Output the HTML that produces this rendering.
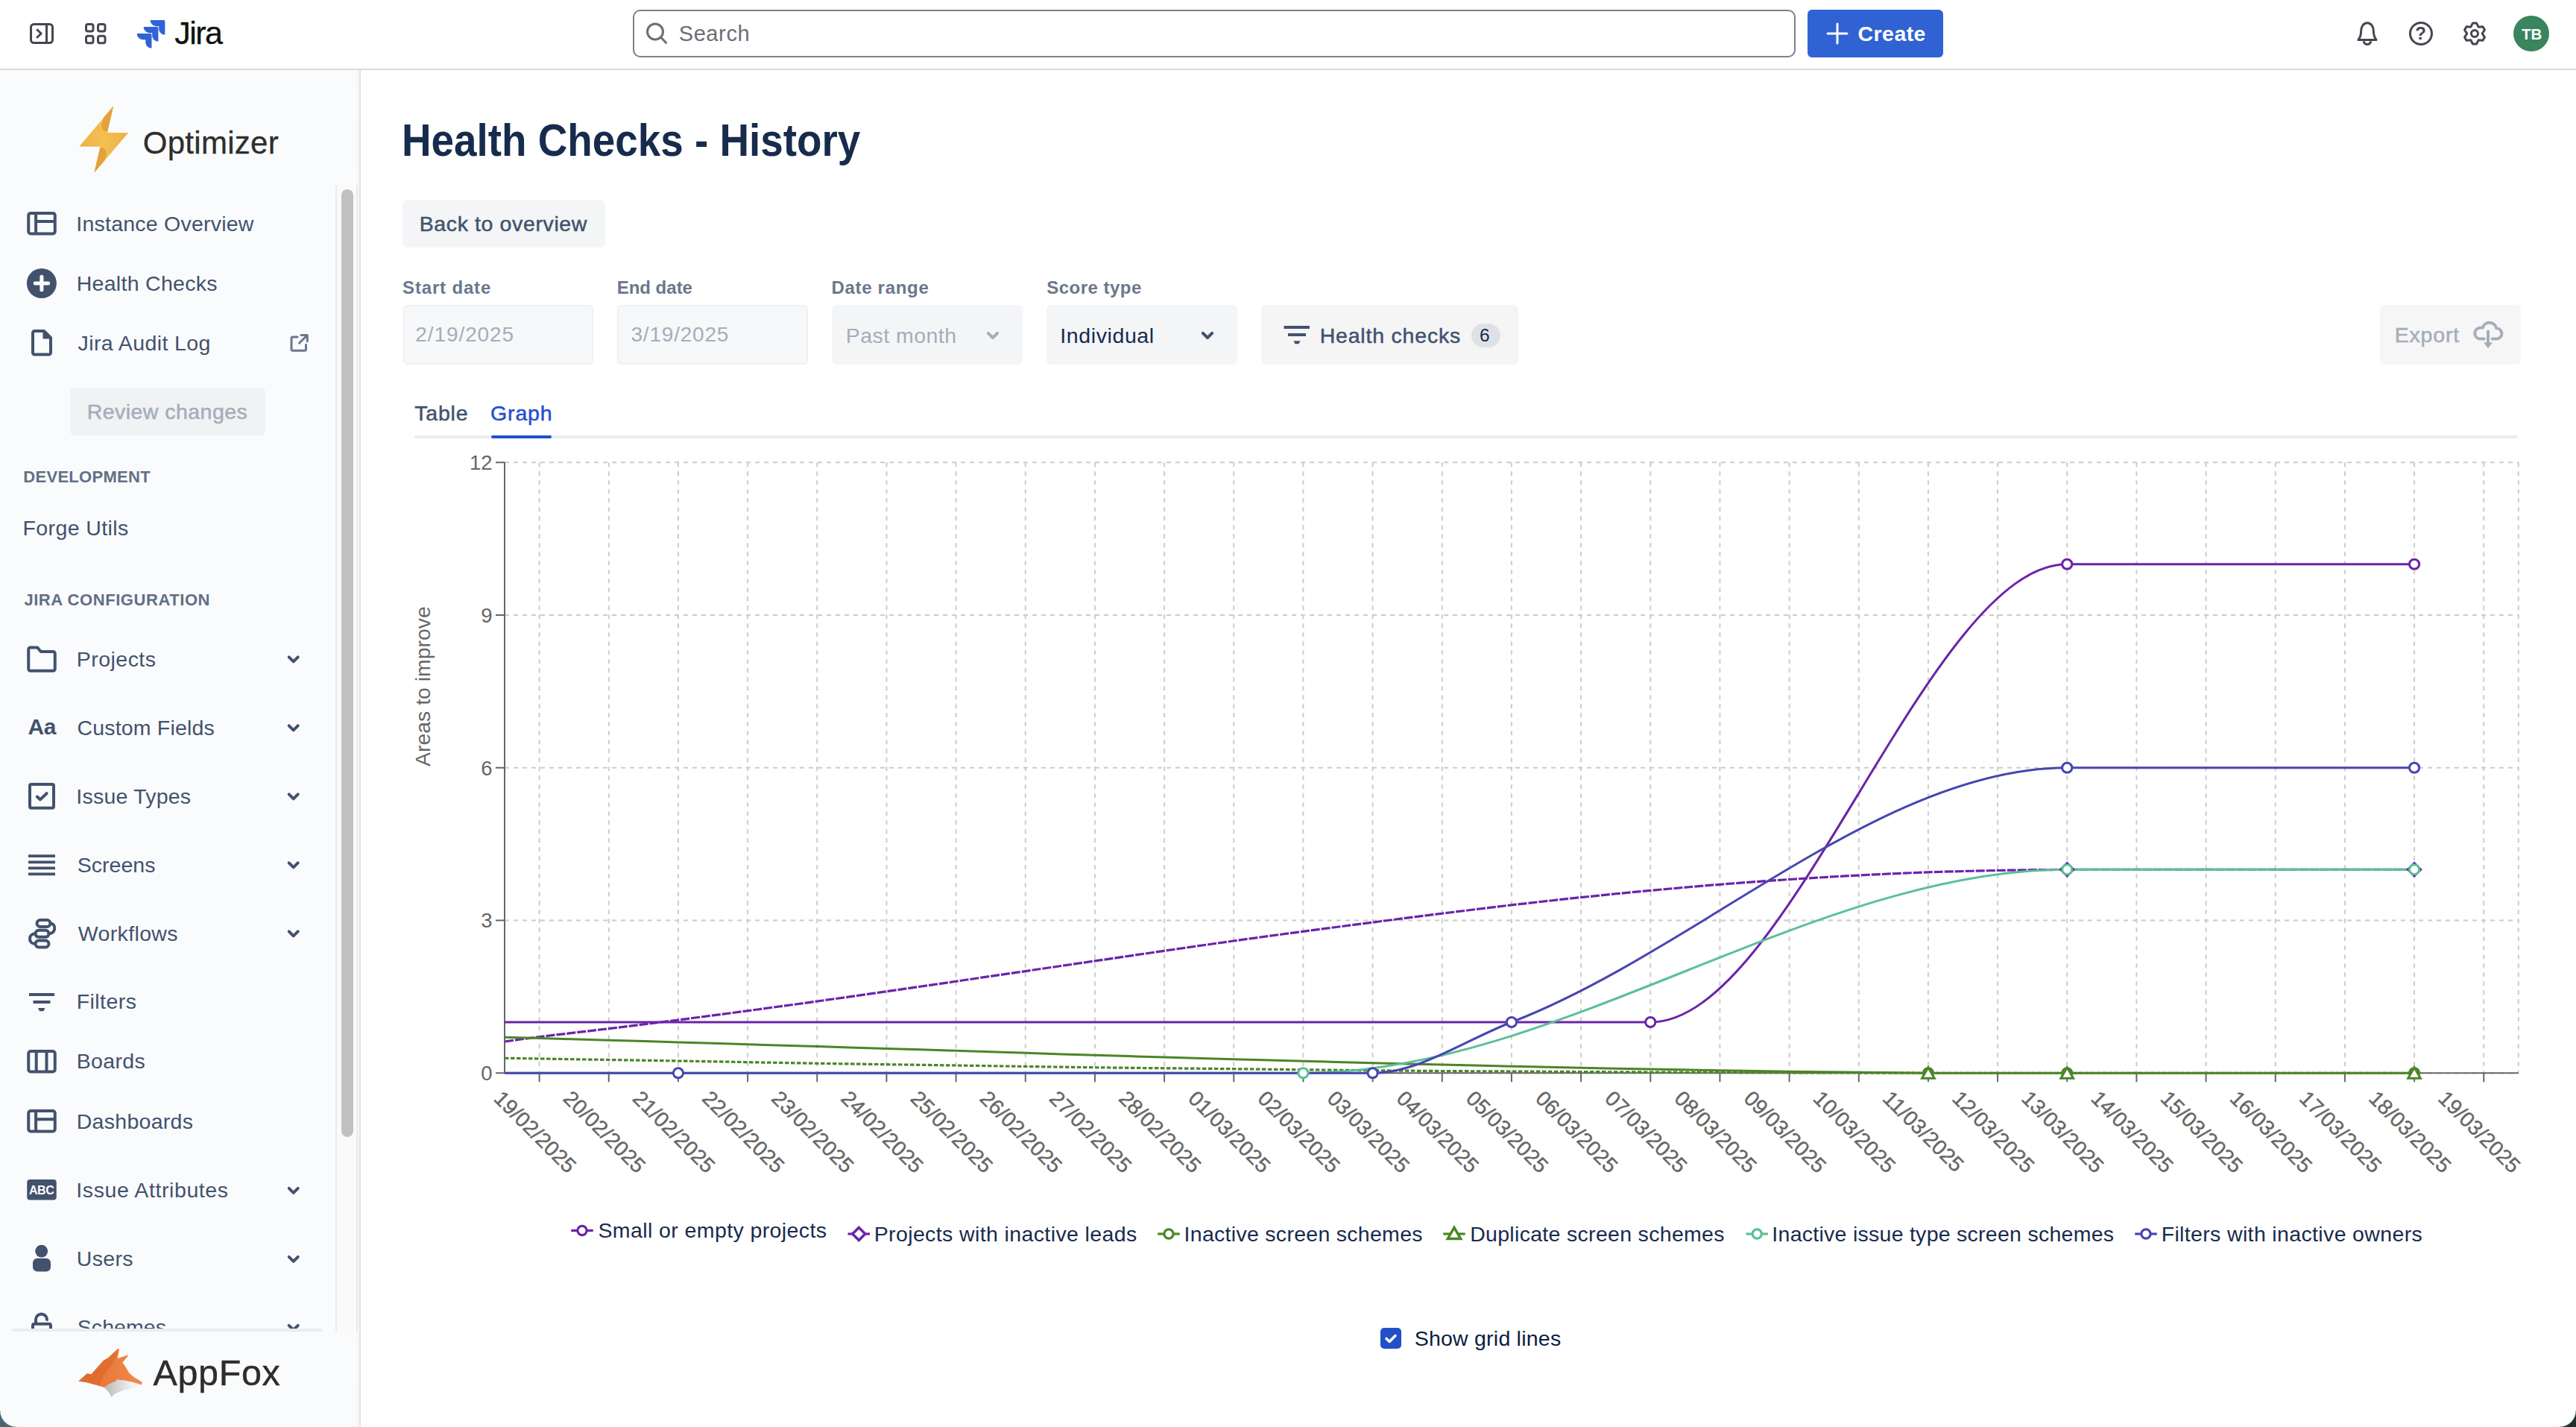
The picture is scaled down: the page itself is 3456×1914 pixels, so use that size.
<!DOCTYPE html>
    <html lang="en"><head><meta charset="utf-8"><title>Health Checks - History</title>
    <style>
    html,body{margin:0;padding:0;background:#fff;}
    body{width:3456px;height:1914px;position:relative;overflow:hidden;font-family:"Liberation Sans",sans-serif;}
    .t{position:absolute;white-space:nowrap;line-height:1;}
    .abs{position:absolute;}
    svg{position:absolute;overflow:visible}
    svg text{font-family:"Liberation Sans",sans-serif;}
    .btn{position:absolute;border-radius:6px;}
    </style></head><body>
    
<div class="abs" style="left:0;top:0;width:3456px;height:92px;background:#fff;border-bottom:2px solid #DADADA"></div>
<div class="abs" style="left:0;top:94px;width:482px;height:1820px;background:linear-gradient(to right,#FAFBFC 478px,#F6F6F6 480px,#F6F6F6 482px);border-right:2px solid #E3E3E3"></div>
<svg style="left:0;top:0" width="3456" height="92" viewBox="0 0 3456 92" fill="none" stroke="#44474F" stroke-width="3" stroke-linecap="round" stroke-linejoin="round">
    <rect x="41.5" y="32.5" width="29" height="25" rx="4"/><path d="M62.5,33V57M50,40l5.2,5-5.2,5"/>
    <rect x="115.5" y="32.5" width="9.5" height="9.5" rx="2.5"/><rect x="131.5" y="32.5" width="9.5" height="9.5" rx="2.5"/>
    <rect x="115.5" y="48.2" width="9.5" height="9.5" rx="2.5"/><rect x="131.5" y="48.2" width="9.5" height="9.5" rx="2.5"/>
    <g transform="translate(178.3,22.3) scale(1.472)" fill="#2F63D6" stroke="none">
    <path d="M28.128 3.2H15.872c0 3.072 2.496 5.568 5.568 5.568h2.24v2.176c0 3.072 2.496 5.568 5.568 5.568V4.32c0-.608-.512-1.12-1.12-1.12z"/>
    <path d="M22.048 9.312H9.792c0 3.072 2.496 5.568 5.568 5.568h2.24v2.176c0 3.072 2.496 5.568 5.568 5.568V10.432c0-.608-.512-1.12-1.12-1.12z"/>
    <path d="M15.968 15.424H3.712c0 3.072 2.496 5.568 5.568 5.568h2.24v2.176c0 3.072 2.496 5.568 5.568 5.568V16.544c0-.608-.512-1.12-1.12-1.12z"/>
    </g>
    <g stroke="#6B6E76"><circle cx="879" cy="42.5" r="10.5"/><path d="M886.8,50.3L893.5,57.3"/></g>
    </svg>
<span class="t " style="top:22.95px;font-size:43px;color:#101214;left:234.33px;letter-spacing:-1.542px;-webkit-text-stroke:0.3px #101214;">Jira</span>
<div class="abs" style="left:849px;top:13px;width:1556px;height:60px;border:2px solid #7D818A;border-radius:10px;background:#fff"></div>
<svg style="left:0;top:0" width="3456" height="92" viewBox="0 0 3456 92" fill="none" stroke="#6B6E76" stroke-width="3" stroke-linecap="round"><circle cx="879" cy="42.5" r="10.5"/><path d="M886.8,50.3L893.5,57.3"/></svg>
<span class="t " style="top:31.05px;font-size:29px;color:#6B6E76;left:910.68px;letter-spacing:0.612px;">Search</span>
<div class="abs" style="left:2425px;top:13px;width:182px;height:64px;border-radius:6px;background:#3062D4"></div>
<svg style="left:0;top:0" width="3456" height="92" viewBox="0 0 3456 92" fill="none" stroke="#fff" stroke-width="3" stroke-linecap="round"><path d="M2452,45H2478M2465,32V58"/></svg>
<span class="t " style="top:31.47px;font-size:28.5px;color:#fff;font-weight:700;left:2492.58px;letter-spacing:0.435px;">Create</span>
<svg style="left:0;top:0" width="3456" height="92" viewBox="0 0 3456 92" fill="none" stroke="#44474F" stroke-width="3" stroke-linecap="round" stroke-linejoin="round">
    <path d="M3164,53.5c2.6-3.6,3.6-6.2,3.6-11.5c0-6.6,3.6-11.3,8.4-11.3s8.400,4.700,8.400,11.300c0,5.300,1,7.900,3.600,11.500z"/>
    <path d="M3171.5,56.5c0.8,2,2.400,3,4.500,3s3.700-1,4.500-3"/>
    <circle cx="3248" cy="45" r="14.5"/>
    <path d="M3317.52,30.92L3322.48,30.92L3325.10,36.17L3330.95,35.81L3333.44,40.11L3330.20,45.00L3333.44,49.89L3330.95,54.19L3325.10,53.83L3322.48,59.08L3317.52,59.08L3314.90,53.83L3309.05,54.19L3306.56,49.89L3309.80,45.00L3306.56,40.11L3309.05,35.81L3314.90,36.17Z"/><circle cx="3320" cy="45" r="4.500"/>
    </svg>
<span class="t" style="left:3240.2px;top:32.6px;font-size:24px;font-weight:700;color:#44474F">?</span>
<div class="abs" style="left:3372px;top:21px;width:48px;height:48px;border-radius:50%;background:#38855E"></div>
<span class="t " style="top:35.02px;font-size:21px;color:#fff;font-weight:700;left:3382.77px;transform:scaleX(0.9772);transform-origin:0 0;">TB</span>
<svg style="left:0;top:0" width="482" height="1914" viewBox="0 0 482 1914">
    <defs><linearGradient id="bolt" x1="0" y1="0" x2="1" y2="1"><stop offset="0" stop-color="#E9A23A"/><stop offset=".5" stop-color="#F3BC4B"/><stop offset="1" stop-color="#E9A640"/></linearGradient>
    <radialGradient id="bolt2" cx=".5" cy=".5" r=".55"><stop offset="0" stop-color="#F4C152"/><stop offset="1" stop-color="#EDAE43"/></radialGradient></defs>
    <path d="M152.060,142.500L106.400,196.400L134.600,196.700L126.400,231.600L172.100,178.200L143.900,177.800Z" fill="url(#bolt2)"/>
    <path d="M152.060,142.500L143.900,177.800C138,177.500,134.500,172,135.200,167C136,161,140,156,143.500,152.600Z" fill="#E5A13C"/>
    <path d="M126.400,231.600L134.600,196.700C140.500,197,144,201.500,143.900,206.500C143.500,212,140,216.500,136.900,219.400Z" fill="#E5A13C"/>
    <path d="M143.900,177.800C138,177.500,134.500,172,135.200,167C136,161,140,156,143.500,152.600M134.600,196.700C140.500,197,144,201.500,143.900,206.500C143.500,212,140,216.500,136.900,219.400" fill="none" stroke="#F9D977" stroke-width="0.9"/>
    </svg>
<span class="t " style="top:170.80px;font-size:42px;color:#2E2E2E;left:191.76px;letter-spacing:0.279px;-webkit-text-stroke:0.3px #2E2E2E;">Optimizer</span>
<span class="t " style="top:286.47px;font-size:28.5px;color:#42526E;left:102.37px;letter-spacing:0.226px;">Instance Overview</span>
<span class="t " style="top:365.97px;font-size:28.5px;color:#42526E;left:102.66px;letter-spacing:0.294px;">Health Checks</span>
<span class="t " style="top:446.47px;font-size:28.5px;color:#42526E;left:104.55px;letter-spacing:0.391px;">Jira Audit Log</span>
<span class="t " style="top:870.22px;font-size:28.5px;color:#42526E;left:102.66px;letter-spacing:0.488px;">Projects</span>
<span class="t " style="top:961.97px;font-size:28.5px;color:#42526E;left:103.55px;letter-spacing:0.174px;">Custom Fields</span>
<span class="t " style="top:1053.97px;font-size:28.5px;color:#42526E;left:102.37px;letter-spacing:0.210px;">Issue Types</span>
<span class="t " style="top:1145.97px;font-size:28.5px;color:#42526E;left:103.71px;letter-spacing:0.044px;">Screens</span>
<span class="t " style="top:1237.72px;font-size:28.5px;color:#42526E;left:104.87px;letter-spacing:0.342px;">Workflows</span>
<span class="t " style="top:1329.47px;font-size:28.5px;color:#42526E;left:102.66px;letter-spacing:0.462px;">Filters</span>
<span class="t " style="top:1409.47px;font-size:28.5px;color:#42526E;left:102.66px;letter-spacing:0.361px;">Boards</span>
<span class="t " style="top:1490.22px;font-size:28.5px;color:#42526E;left:102.66px;letter-spacing:0.298px;">Dashboards</span>
<span class="t " style="top:1582.22px;font-size:28.5px;color:#42526E;left:102.37px;letter-spacing:0.587px;">Issue Attributes</span>
<span class="t " style="top:1673.97px;font-size:28.5px;color:#42526E;left:102.80px;letter-spacing:0.323px;">Users</span>
<div class="abs" style="left:0;top:1750px;width:450px;height:32px;overflow:hidden">
<span class="t " style="top:15.97px;font-size:28.5px;color:#42526E;left:103.71px;letter-spacing:0.085px;">Schemes</span>
</div>
<div class="abs" style="left:94px;top:520px;width:261.5px;height:64px;border-radius:6px;background:#F1F2F4"></div>
<span class="t " style="top:538.47px;font-size:28.5px;color:#A5ADBA;left:116.66px;letter-spacing:0.461px;-webkit-text-stroke:0.5px #A5ADBA;">Review changes</span>
<span class="t " style="top:629.48px;font-size:22px;color:#626F86;font-weight:700;left:31.28px;letter-spacing:0.299px;">DEVELOPMENT</span>
<span class="t " style="top:693.97px;font-size:28.5px;color:#42526E;left:30.41px;letter-spacing:0.407px;">Forge Utils</span>
<span class="t " style="top:793.98px;font-size:22px;color:#626F86;font-weight:700;left:32.42px;letter-spacing:0.559px;">JIRA CONFIGURATION</span>
<svg style="left:0;top:0" width="482" height="1914" viewBox="0 0 482 1914"><rect x="38.25" y="285.9" width="35.5" height="27.5" rx="3" fill="none" stroke="#42526E" stroke-width="4"/><path d="M48.1,285.9v27.5M48.1,297.09999999999997H73.75" fill="none" stroke="#42526E" stroke-width="4"/><circle cx="55.9" cy="380" r="20" fill="#42526E"/><path d="M47.2,380h17.4M55.9,371.3v17.4" stroke="#fff" stroke-width="5" stroke-linecap="round"/><path d="M59,444H46.500a2.500,2.500,0,0,0-2.500,2.500v26.5a2.500,2.500,0,0,0,2.500,2.500h19a2.500,2.500,0,0,0,2.500-2.500V453z" fill="none" stroke="#42526E" stroke-width="4" stroke-linejoin="round"/><path d="M57.5,443.5l11,11h-11z" fill="#42526E"/><g fill="none" stroke="#6B778C" stroke-width="3" stroke-linecap="round" stroke-linejoin="round"><path d="M399,452h-6a2,2,0,0,0-2,2v14.200a2,2,0,0,0,2,2h15.500a2,2,0,0,0,2-2v-6"/><path d="M404,449.500h8.300v8.300M412,449.800l-10.500,10.500"/></g><path d="M38.25,871a2.500,2.500,0,0,1,2.500-2.500h9.500l4.500,5.500h16.500a2.500,2.500,0,0,1,2.500,2.500v20.800a2.500,2.500,0,0,1-2.500,2.500h-30.500a2.500,2.500,0,0,1-2.500-2.500z" fill="none" stroke="#42526E" stroke-width="4" stroke-linejoin="round"/><path d="M387.7,881.3l6,6l6-6" fill="none" stroke="#42526E" stroke-width="4" stroke-linecap="round" stroke-linejoin="round"/><path d="M387.7,973.3l6,6l6-6" fill="none" stroke="#42526E" stroke-width="4" stroke-linecap="round" stroke-linejoin="round"/><rect x="40" y="1052" width="32" height="31.750" rx="2" fill="none" stroke="#42526E" stroke-width="4"/><path d="M49.800,1068.600l4.200,3.800l8.600-8.200" fill="none" stroke="#42526E" stroke-width="4" stroke-linecap="round" stroke-linejoin="round"/><path d="M387.7,1065.3l6,6l6-6" fill="none" stroke="#42526E" stroke-width="4" stroke-linecap="round" stroke-linejoin="round"/><path d="M38,1148.100h36M38,1156.300h36M38,1164.400h36M38,1172.400h36" stroke="#42526E" stroke-width="3.8" stroke-linecap="butt" fill="none"/><path d="M387.7,1157.3l6,6l6-6" fill="none" stroke="#42526E" stroke-width="4" stroke-linecap="round" stroke-linejoin="round"/><g fill="none" stroke="#42526E" stroke-width="4" stroke-linecap="round">
    <rect x="49.500" y="1234" width="18" height="9" rx="4.500"/><rect x="47.500" y="1247.800" width="18" height="9" rx="4.500"/><rect x="47.500" y="1261.500" width="18" height="9" rx="4.500"/>
    <path d="M67.500,1238.500c8,0,8,13.800,-2,13.800"/><path d="M47.500,1252.300c-10,0-10,13.700,0,13.700"/></g><path d="M387.7,1249.3l6,6l6-6" fill="none" stroke="#42526E" stroke-width="4" stroke-linecap="round" stroke-linejoin="round"/><path d="M39,1334h34M44.500,1344h23" stroke="#42526E" stroke-width="4" stroke-linecap="butt" fill="none"/><path d="M51,1352h9.500l-2,4.300h-5.500z" fill="#42526E"/><rect x="38.25" y="1410" width="35.500" height="27.500" rx="3" fill="none" stroke="#42526E" stroke-width="4"/><path d="M48.700,1410v27.500M62.500,1410v27.500" stroke="#42526E" stroke-width="4" fill="none"/><rect x="38.25" y="1490" width="35.5" height="27.5" rx="3" fill="none" stroke="#42526E" stroke-width="4"/><path d="M48.1,1490v27.5M48.1,1501.2H73.75" fill="none" stroke="#42526E" stroke-width="4"/><rect x="36.25" y="1582" width="39.500" height="27.500" rx="4" fill="#42526E"/><path d="M387.7,1593.8l6,6l6-6" fill="none" stroke="#42526E" stroke-width="4" stroke-linecap="round" stroke-linejoin="round"/><circle cx="55.700" cy="1678.200" r="8.400" fill="#42526E"/><rect x="44" y="1687.700" width="24" height="17.800" rx="6" fill="#42526E"/><path d="M387.7,1685.8l6,6l6-6" fill="none" stroke="#42526E" stroke-width="4" stroke-linecap="round" stroke-linejoin="round"/></svg>
<span class="t" style="left:37.5px;top:960.11px;font-size:30px;font-weight:700;color:#42526E;letter-spacing:-0.5px">Aa</span>
<span class="t" style="left:38.9px;top:1588.76px;font-size:16px;font-weight:700;color:#fff;letter-spacing:-0.4px">ABC</span>
<svg style="left:0;top:1750px;overflow:hidden" width="450" height="32" viewBox="0 1750 450 32"><g fill="none" stroke="#42526E" stroke-width="4" stroke-linecap="round"><path d="M48,1775v-5a7.500,7.500,0,0,1,15,0"/><rect x="44" y="1775.700" width="24" height="20" rx="2"/></g><path d="M387.7,1777.8l6,6l6-6" fill="none" stroke="#42526E" stroke-width="4" stroke-linecap="round" stroke-linejoin="round"/></svg>
<div class="abs" style="left:450px;top:248px;width:30px;height:1538px;background:#FAFAFA;border-left:2px solid #EAEAEA;border-right:2px solid #EAEAEA;box-sizing:border-box"></div>
<div class="abs" style="left:458px;top:254px;width:16px;height:1271px;border-radius:8px;background:#C1C1C1"></div>
<div class="abs" style="left:16px;top:1782px;width:417px;height:4px;border-radius:2px;background:#EBECF0"></div>
<svg style="left:0;top:0" width="482" height="1914" viewBox="0 0 482 1914">
    <defs><linearGradient id="fox" x1="0" y1="0" x2="1" y2="0"><stop offset="0" stop-color="#E56E2E"/><stop offset="1" stop-color="#F08C4C"/></linearGradient>
    <linearGradient id="foxw" x1="0" y1="0" x2="1" y2="0"><stop offset="0" stop-color="#B9B9B9"/><stop offset=".75" stop-color="#F3F3F3"/><stop offset="1" stop-color="#F8F8F8"/></linearGradient></defs>
    <path d="M105.4,1852.4L116.8,1842.3L122.5,1843.3L138.6,1825L144.9,1821.2L158.4,1808.9L160,1809.6L157.8,1821.9L171.3,1817.4L172,1818.4L164.4,1827.5L168.8,1833.8L173.2,1841.4L179.5,1847.1L187.4,1851.5L190.9,1854.6L189.6,1857.5L178.3,1854L165.700,1851.500L156.800,1850.500L155.600,1852.800L146.800,1856.500L139.800,1860.900L127.800,1857.200L115.200,1854Z" fill="url(#fox)"/>
    <path d="M105.4,1852.4L116.8,1842.3L122.5,1843.3L138.6,1825L144.9,1821.2L158.4,1808.9L155,1822L149,1832L139,1845L133,1858.700L127.800,1857.200L115.200,1854Z" fill="#D9652A" opacity=".55"/>
    <path d="M139.800,1860.900L146.800,1856.500L155.600,1852.800L156.800,1850.500L165.700,1851.500L178.300,1854L189.600,1857.500L181.400,1861.600L165.700,1864.700L153.700,1869.800L149.300,1874.200L146.800,1868.500L143.600,1864.700Z" fill="url(#foxw)"/>
    </svg>
<span class="t " style="top:1817.34px;font-size:48.5px;color:#2D2D2D;left:205.61px;letter-spacing:0.592px;-webkit-text-stroke:0.4px #2D2D2D;">AppFox</span>
<div class="abs" style="left:0;top:1892px;width:22px;height:22px;background:radial-gradient(circle at 100% 0,transparent 21px,#486570 22.5px)"></div>
<div class="abs" style="left:3434px;top:1892px;width:22px;height:22px;background:radial-gradient(circle at 0 0,transparent 21px,#1F2E33 22.5px)"></div>
<span class="t " style="top:157.71px;font-size:61px;color:#172B4D;font-weight:700;left:538.83px;transform:scaleX(0.8984);transform-origin:0 0;">Health Checks - History</span>
<div class="btn" style="left:540px;top:268px;width:272px;height:63.5px;background:#F4F5F6"></div>
<span class="t " style="top:285.97px;font-size:28.5px;color:#42526E;left:562.66px;letter-spacing:0.623px;-webkit-text-stroke:0.5px #42526E;">Back to overview</span>
<span class="t " style="top:374.03px;font-size:24px;color:#6B778C;font-weight:700;left:540.06px;letter-spacing:0.840px;">Start date</span>
<span class="t " style="top:374.03px;font-size:24px;color:#6B778C;font-weight:700;left:827.64px;">End date</span>
<span class="t " style="top:374.03px;font-size:24px;color:#6B778C;font-weight:700;left:1115.39px;letter-spacing:0.709px;">Date range</span>
<span class="t " style="top:374.03px;font-size:24px;color:#6B778C;font-weight:700;left:1404.31px;letter-spacing:0.477px;">Score type</span>
<div class="btn" style="left:540.5px;top:409px;width:255.5px;height:80px;background:#F7F8F9;border:2px solid #EFF0F2;box-sizing:border-box"></div>
<div class="btn" style="left:828px;top:409px;width:255.5px;height:80px;background:#F7F8F9;border:2px solid #EFF0F2;box-sizing:border-box"></div>
<div class="btn" style="left:1116px;top:409px;width:256px;height:80px;background:#F4F5F7"></div>
<div class="btn" style="left:1404px;top:409px;width:256px;height:80px;background:#F4F5F7"></div>
<div class="btn" style="left:1692px;top:409px;width:345px;height:80px;background:#F5F5F6"></div>
<div class="btn" style="left:3193px;top:409px;width:189px;height:80px;background:#F6F6F7"></div>
<span class="t " style="top:435.15px;font-size:28px;color:#A5ADBA;left:557.34px;letter-spacing:0.907px;">2/19/2025</span>
<span class="t " style="top:435.15px;font-size:28px;color:#A5ADBA;left:846.43px;letter-spacing:0.802px;">3/19/2025</span>
<span class="t " style="top:435.72px;font-size:28.5px;color:#A5ADBA;left:1134.66px;letter-spacing:0.476px;">Past month</span>
<span class="t " style="top:435.72px;font-size:28.5px;color:#172B4D;left:1422.37px;letter-spacing:0.596px;">Individual</span>
<span class="t " style="top:435.97px;font-size:28.5px;color:#42526E;left:1770.66px;letter-spacing:0.800px;-webkit-text-stroke:0.5px #42526E;">Health checks</span>
<div class="abs" style="left:1974px;top:434px;width:39px;height:32px;border-radius:16px;background:#DFE1E6"></div>
<span class="t " style="top:437.86px;font-size:24.5px;color:#172B4D;left:1985.01px;">6</span>
<span class="t " style="top:435.27px;font-size:28.5px;color:#A5ADBA;left:3212.66px;letter-spacing:0.834px;-webkit-text-stroke:0.5px #A5ADBA;">Export</span>
<svg style="left:0;top:0" width="3456" height="600" viewBox="0 0 3456 600" fill="none" stroke-linecap="round" stroke-linejoin="round">
    <path d="M1325.700,446.800l6.200,6.200l6.200-6.200" stroke="#A5ADBA" stroke-width="4"/>
    <path d="M1613.800,446.800l6.200,6.200l6.200-6.200" stroke="#42526E" stroke-width="4"/>
    <path d="M1722.500,439h34.500M1728,449h24" stroke="#42526E" stroke-width="4" stroke-linecap="butt"/><path d="M1735.500,457.300h9l-2,4h-5z" fill="#42526E" stroke="none"/>
    <g stroke="#A5ADBA" stroke-width="4"><path d="M3332.700,454.500H3327.300A7.400,7.400,0,0,1,3326.500,439.800L3330.800,439.600A9.500,9.500,0,0,1,3349.200,440.300A7.100,7.100,0,0,1,3349.300,454.600H3343.800"/><path d="M3338,444.500v15"/></g>
    <path d="M3332,459.300h12l-6,8z" fill="#A5ADBA" stroke="none"/>
    </svg>
<span class="t " style="top:539.72px;font-size:28.5px;color:#42526E;left:556.36px;letter-spacing:0.754px;-webkit-text-stroke:0.5px #42526E;">Table</span>
<span class="t " style="top:539.72px;font-size:28.5px;color:#1F50CC;left:658.07px;letter-spacing:0.829px;-webkit-text-stroke:0.5px #1F50CC;">Graph</span>
<div class="abs" style="left:556px;top:584px;width:2822px;height:4px;border-radius:2px;background:#EBECF0"></div>
<div class="abs" style="left:659px;top:584px;width:81px;height:4px;border-radius:2px;background:#1F50CC"></div>
<svg class="chart" width="3456" height="1914" viewBox="0 0 3456 1914" style="position:absolute;left:0;top:0;overflow:visible">
<defs><clipPath id="plot"><rect x="677.0" y="610.2" width="2701.8" height="843.0"/></clipPath></defs>
<path d="M677.0,1439.25H3378.8M677.0,1234.50H3378.8M677.0,1029.75H3378.8M677.0,825.00H3378.8M677.0,620.25H3378.8M723.60,620.25V1439.25M816.77,620.25V1439.25M909.93,620.25V1439.25M1003.10,620.25V1439.25M1096.26,620.25V1439.25M1189.43,620.25V1439.25M1282.60,620.25V1439.25M1375.76,620.25V1439.25M1468.93,620.25V1439.25M1562.09,620.25V1439.25M1655.26,620.25V1439.25M1748.43,620.25V1439.25M1841.59,620.25V1439.25M1934.76,620.25V1439.25M2027.92,620.25V1439.25M2121.09,620.25V1439.25M2214.26,620.25V1439.25M2307.42,620.25V1439.25M2400.59,620.25V1439.25M2493.75,620.25V1439.25M2586.92,620.25V1439.25M2680.09,620.25V1439.25M2773.25,620.25V1439.25M2866.42,620.25V1439.25M2959.58,620.25V1439.25M3052.75,620.25V1439.25M3145.92,620.25V1439.25M3239.08,620.25V1439.25M3332.25,620.25V1439.25M677.0,620.25V1439.25M3378.8,620.25V1439.25" fill="none" stroke="#ccc" stroke-width="2" stroke-dasharray="6 6"/>
<path d="M677.0,620.25V1439.25M677.0,1439.25H3378.8" fill="none" stroke="#666" stroke-width="2"/>
<path d="M665.0,1439.25H677.0M665.0,1234.50H677.0M665.0,1029.75H677.0M665.0,825.00H677.0M665.0,620.25H677.0M723.60,1439.25v12M816.77,1439.25v12M909.93,1439.25v12M1003.10,1439.25v12M1096.26,1439.25v12M1189.43,1439.25v12M1282.60,1439.25v12M1375.76,1439.25v12M1468.93,1439.25v12M1562.09,1439.25v12M1655.26,1439.25v12M1748.43,1439.25v12M1841.59,1439.25v12M1934.76,1439.25v12M2027.92,1439.25v12M2121.09,1439.25v12M2214.26,1439.25v12M2307.42,1439.25v12M2400.59,1439.25v12M2493.75,1439.25v12M2586.92,1439.25v12M2680.09,1439.25v12M2773.25,1439.25v12M2866.42,1439.25v12M2959.58,1439.25v12M3052.75,1439.25v12M3145.92,1439.25v12M3239.08,1439.25v12M3332.25,1439.25v12" fill="none" stroke="#666" stroke-width="2"/>
<text x="660.5" y="1449.2" text-anchor="end" font-size="27.5" fill="#666">0</text>
<text x="660.5" y="1244.4" text-anchor="end" font-size="27.5" fill="#666">3</text>
<text x="660.5" y="1039.7" text-anchor="end" font-size="27.5" fill="#666">6</text>
<text x="660.5" y="834.9" text-anchor="end" font-size="27.5" fill="#666">9</text>
<text x="660.5" y="630.1" text-anchor="end" font-size="27.5" fill="#666">12</text>
<text transform="translate(577,920.6) rotate(-90)" text-anchor="middle" font-size="28.4" fill="#666">Areas to improve</text>
<text transform="translate(661.0,1474.9) rotate(45)" font-size="28.3" fill="#666" stroke="#666" stroke-width="0.4">19/02/2025</text>
<text transform="translate(754.1,1474.9) rotate(45)" font-size="28.3" fill="#666" stroke="#666" stroke-width="0.4">20/02/2025</text>
<text transform="translate(847.3,1474.9) rotate(45)" font-size="28.3" fill="#666" stroke="#666" stroke-width="0.4">21/02/2025</text>
<text transform="translate(940.4,1474.9) rotate(45)" font-size="28.3" fill="#666" stroke="#666" stroke-width="0.4">22/02/2025</text>
<text transform="translate(1033.6,1474.9) rotate(45)" font-size="28.3" fill="#666" stroke="#666" stroke-width="0.4">23/02/2025</text>
<text transform="translate(1126.8,1474.9) rotate(45)" font-size="28.3" fill="#666" stroke="#666" stroke-width="0.4">24/02/2025</text>
<text transform="translate(1219.9,1474.9) rotate(45)" font-size="28.3" fill="#666" stroke="#666" stroke-width="0.4">25/02/2025</text>
<text transform="translate(1313.1,1474.9) rotate(45)" font-size="28.3" fill="#666" stroke="#666" stroke-width="0.4">26/02/2025</text>
<text transform="translate(1406.3,1474.9) rotate(45)" font-size="28.3" fill="#666" stroke="#666" stroke-width="0.4">27/02/2025</text>
<text transform="translate(1499.4,1474.9) rotate(45)" font-size="28.3" fill="#666" stroke="#666" stroke-width="0.4">28/02/2025</text>
<text transform="translate(1592.6,1474.9) rotate(45)" font-size="28.3" fill="#666" stroke="#666" stroke-width="0.4">01/03/2025</text>
<text transform="translate(1685.8,1474.9) rotate(45)" font-size="28.3" fill="#666" stroke="#666" stroke-width="0.4">02/03/2025</text>
<text transform="translate(1778.9,1474.9) rotate(45)" font-size="28.3" fill="#666" stroke="#666" stroke-width="0.4">03/03/2025</text>
<text transform="translate(1872.1,1474.9) rotate(45)" font-size="28.3" fill="#666" stroke="#666" stroke-width="0.4">04/03/2025</text>
<text transform="translate(1965.3,1474.9) rotate(45)" font-size="28.3" fill="#666" stroke="#666" stroke-width="0.4">05/03/2025</text>
<text transform="translate(2058.4,1474.9) rotate(45)" font-size="28.3" fill="#666" stroke="#666" stroke-width="0.4">06/03/2025</text>
<text transform="translate(2151.6,1474.9) rotate(45)" font-size="28.3" fill="#666" stroke="#666" stroke-width="0.4">07/03/2025</text>
<text transform="translate(2244.8,1474.9) rotate(45)" font-size="28.3" fill="#666" stroke="#666" stroke-width="0.4">08/03/2025</text>
<text transform="translate(2337.9,1474.9) rotate(45)" font-size="28.3" fill="#666" stroke="#666" stroke-width="0.4">09/03/2025</text>
<text transform="translate(2431.1,1474.9) rotate(45)" font-size="28.3" fill="#666" stroke="#666" stroke-width="0.4">10/03/2025</text>
<text transform="translate(2524.3,1474.9) rotate(45)" font-size="28.3" fill="#666" stroke="#666" stroke-width="0.4">11/03/2025</text>
<text transform="translate(2617.4,1474.9) rotate(45)" font-size="28.3" fill="#666" stroke="#666" stroke-width="0.4">12/03/2025</text>
<text transform="translate(2710.6,1474.9) rotate(45)" font-size="28.3" fill="#666" stroke="#666" stroke-width="0.4">13/03/2025</text>
<text transform="translate(2803.8,1474.9) rotate(45)" font-size="28.3" fill="#666" stroke="#666" stroke-width="0.4">14/03/2025</text>
<text transform="translate(2896.9,1474.9) rotate(45)" font-size="28.3" fill="#666" stroke="#666" stroke-width="0.4">15/03/2025</text>
<text transform="translate(2990.1,1474.9) rotate(45)" font-size="28.3" fill="#666" stroke="#666" stroke-width="0.4">16/03/2025</text>
<text transform="translate(3083.3,1474.9) rotate(45)" font-size="28.3" fill="#666" stroke="#666" stroke-width="0.4">17/03/2025</text>
<text transform="translate(3176.4,1474.9) rotate(45)" font-size="28.3" fill="#666" stroke="#666" stroke-width="0.4">18/03/2025</text>
<text transform="translate(3269.6,1474.9) rotate(45)" font-size="28.3" fill="#666" stroke="#666" stroke-width="0.4">19/03/2025</text>
<g clip-path="url(#plot)" fill="none" stroke-linejoin="round">
<path d="M677.0,1371.00L2214.26,1371.00C2400.59,1371.00,2586.92,756.75,2773.25,756.75L3239.08,756.75" stroke="#6B24A8" stroke-width="3"/>
<path d="M677.02,1397.00C692.54,1394.91,708.07,1392.65,723.60,1390.72C754.66,1386.88,785.71,1383.47,816.77,1379.68C847.82,1375.90,878.88,1371.99,909.93,1368.00C940.99,1364.01,972.04,1359.91,1003.10,1355.75C1034.15,1351.58,1065.21,1347.32,1096.26,1343.00C1127.32,1338.68,1158.37,1334.27,1189.43,1329.81C1220.49,1325.35,1251.54,1320.79,1282.60,1316.25C1313.65,1311.70,1344.71,1307.11,1375.76,1302.56C1406.82,1298.01,1437.87,1293.49,1468.93,1288.95C1499.98,1284.40,1531.04,1279.81,1562.09,1275.31C1593.15,1270.82,1624.20,1266.32,1655.26,1261.99C1686.32,1257.65,1717.37,1253.45,1748.43,1249.31C1779.48,1245.17,1810.54,1241.14,1841.59,1237.13C1872.65,1233.12,1903.70,1229.10,1934.76,1225.24C1965.81,1221.37,1996.87,1217.52,2027.92,1213.92C2058.98,1210.32,2090.03,1206.89,2121.09,1203.63C2152.15,1200.38,2183.20,1197.28,2214.26,1194.39C2245.31,1191.50,2276.37,1188.77,2307.42,1186.30C2338.48,1183.82,2369.53,1181.59,2400.59,1179.54C2431.64,1177.50,2462.70,1175.63,2493.75,1174.03C2524.81,1172.43,2555.86,1171.01,2586.92,1169.92C2617.98,1168.83,2649.03,1168.09,2680.09,1167.48C2711.14,1166.87,2742.20,1166.66,2773.25,1166.25L3239.08,1166.25" stroke="#6B24A8" stroke-width="3.2" stroke-dasharray="12 2"/>
<path d="M677.02,1391.27C692.54,1391.68,708.07,1392.07,723.60,1392.50C754.66,1393.36,785.71,1394.23,816.77,1395.14C847.82,1396.05,878.88,1397.02,909.93,1397.96C940.99,1398.89,972.04,1399.82,1003.10,1400.76C1034.15,1401.69,1065.21,1402.61,1096.26,1403.56C1127.32,1404.50,1158.37,1405.45,1189.43,1406.42C1220.49,1407.39,1251.54,1408.37,1282.60,1409.36C1313.65,1410.35,1344.71,1411.38,1375.76,1412.36C1406.82,1413.34,1437.87,1414.30,1468.93,1415.24C1499.98,1416.18,1531.04,1417.10,1562.09,1418.01C1593.15,1418.92,1624.20,1419.83,1655.26,1420.70C1686.32,1421.58,1717.37,1422.43,1748.43,1423.26C1779.48,1424.10,1810.54,1424.92,1841.59,1425.72C1872.65,1426.52,1903.70,1427.31,1934.76,1428.06C1965.81,1428.80,1996.87,1429.52,2027.92,1430.21C2058.98,1430.89,2090.03,1431.53,2121.09,1432.17C2152.15,1432.80,2183.20,1433.42,2214.26,1434.01C2245.31,1434.61,2276.37,1435.21,2307.42,1435.74C2338.48,1436.26,2369.53,1436.76,2400.59,1437.19C2431.64,1437.61,2462.70,1437.97,2493.75,1438.31C2524.81,1438.66,2555.86,1438.94,2586.92,1439.25L3239.08,1439.25" stroke="#4C8527" stroke-width="3"/>
<path d="M677.02,1419.25C692.54,1419.50,708.07,1419.75,723.60,1420.00C785.71,1421.00,847.82,1421.96,909.93,1423.01C972.04,1424.05,1034.15,1425.28,1096.26,1426.28C1158.37,1427.28,1220.49,1428.10,1282.60,1429.01C1344.71,1429.92,1406.82,1430.96,1468.93,1431.74C1531.04,1432.53,1593.15,1433.05,1655.26,1433.72C1717.37,1434.39,1779.48,1435.15,1841.59,1435.77C1872.65,1436.08,1903.70,1436.32,1934.76,1436.52C1965.81,1436.72,1996.87,1436.83,2027.92,1437.00C2090.03,1437.33,2152.15,1437.73,2214.26,1438.02C2276.37,1438.32,2338.48,1438.57,2400.59,1438.77C2462.70,1438.98,2524.81,1439.09,2586.92,1439.25L3239.08,1439.25" stroke="#4C8527" stroke-width="3.2" stroke-dasharray="5.500 2.500"/>
<path d="M677.0,1439.25L1748.43,1439.25C2090.03,1439.25,2431.64,1166.25,2773.25,1166.25L3239.08,1166.25" stroke="#5BBF98" stroke-width="3"/>
<path d="M677.0,1439.25L909.93,1439.25L909.93,1439.25C1220.49,1439.25,1531.04,1439.25,1841.59,1439.25C1903.70,1439.25,1965.81,1394.89,2027.92,1371.00C2276.37,1275.45,2524.81,1029.75,2773.25,1029.75C2928.53,1029.75,3083.81,1029.75,3239.08,1029.75" stroke="#4845B0" stroke-width="3"/>
</g>
<circle cx="2214.26" cy="1371.00" r="6.6" fill="#fff" stroke="#6B24A8" stroke-width="3"/>
<circle cx="2773.25" cy="756.75" r="6.6" fill="#fff" stroke="#6B24A8" stroke-width="3"/>
<circle cx="3239.08" cy="756.75" r="6.6" fill="#fff" stroke="#6B24A8" stroke-width="3"/>
<path d="M2773.25,1157.65L2781.85,1166.25L2773.25,1174.85L2764.65,1166.25Z" fill="#fff" stroke="#6B24A8" stroke-width="3"/>
<path d="M3239.08,1157.65L3247.68,1166.25L3239.08,1174.85L3230.48,1166.25Z" fill="#fff" stroke="#6B24A8" stroke-width="3"/>
<circle cx="2586.92" cy="1439.25" r="6.6" fill="#fff" stroke="#4C8527" stroke-width="3"/>
<circle cx="2773.25" cy="1439.25" r="6.6" fill="#fff" stroke="#4C8527" stroke-width="3"/>
<circle cx="3239.08" cy="1439.25" r="6.6" fill="#fff" stroke="#4C8527" stroke-width="3"/>
<path d="M2586.92,1431.85L2595.22,1446.15L2578.62,1446.15Z" fill="#fff" stroke="#4C8527" stroke-width="3" stroke-linejoin="miter"/>
<path d="M2773.25,1431.85L2781.55,1446.15L2764.95,1446.15Z" fill="#fff" stroke="#4C8527" stroke-width="3" stroke-linejoin="miter"/>
<path d="M3239.08,1431.85L3247.38,1446.15L3230.78,1446.15Z" fill="#fff" stroke="#4C8527" stroke-width="3" stroke-linejoin="miter"/>
<circle cx="1748.43" cy="1439.25" r="6.6" fill="#fff" stroke="#5BBF98" stroke-width="3"/>
<circle cx="2773.25" cy="1166.25" r="6.6" fill="#fff" stroke="#5BBF98" stroke-width="3"/>
<circle cx="3239.08" cy="1166.25" r="6.6" fill="#fff" stroke="#5BBF98" stroke-width="3"/>
<circle cx="909.93" cy="1439.25" r="6.6" fill="#fff" stroke="#4845B0" stroke-width="3"/>
<circle cx="1841.59" cy="1439.25" r="6.6" fill="#fff" stroke="#4845B0" stroke-width="3"/>
<circle cx="2027.92" cy="1371.00" r="6.6" fill="#fff" stroke="#4845B0" stroke-width="3"/>
<circle cx="2773.25" cy="1029.75" r="6.6" fill="#fff" stroke="#4845B0" stroke-width="3"/>
<circle cx="3239.08" cy="1029.75" r="6.6" fill="#fff" stroke="#4845B0" stroke-width="3"/>
</svg>
<span class="t " style="top:1636.47px;font-size:28.5px;color:#172B4D;left:802.46px;letter-spacing:0.400px;">Small or empty projects</span>
<span class="t " style="top:1640.97px;font-size:28.5px;color:#172B4D;left:1172.66px;letter-spacing:0.387px;">Projects with inactive leads</span>
<span class="t " style="top:1640.97px;font-size:28.5px;color:#172B4D;left:1588.62px;letter-spacing:0.285px;">Inactive screen schemes</span>
<span class="t " style="top:1640.97px;font-size:28.5px;color:#172B4D;left:1972.16px;letter-spacing:0.309px;">Duplicate screen schemes</span>
<span class="t " style="top:1640.97px;font-size:28.5px;color:#172B4D;left:2377.37px;letter-spacing:0.266px;">Inactive issue type screen schemes</span>
<span class="t " style="top:1640.97px;font-size:28.5px;color:#172B4D;left:2899.66px;letter-spacing:0.355px;">Filters with inactive owners</span>
<svg style="left:0;top:0" width="3456" height="1914" viewBox="0 0 3456 1914"><path d="M766.25,1650.5h29.500" stroke="#6B24A8" stroke-width="3.200" fill="none"/><circle cx="781.0" cy="1650.5" r="6.100" fill="#fff" stroke="#6B24A8" stroke-width="3.200"/><path d="M1137.5,1655h29.500" stroke="#6B24A8" stroke-width="3.200" fill="none"/><path d="M1152.25,1646.5l8.500,8.500l-8.500,8.500l-8.500-8.500z" fill="#fff" stroke="#6B24A8" stroke-width="3.500"/><path d="M1553.25,1655h29.500" stroke="#4C8527" stroke-width="3.200" fill="none"/><circle cx="1568.0" cy="1655" r="6.100" fill="#fff" stroke="#4C8527" stroke-width="3.200"/><path d="M1936.25,1655h29.500" stroke="#4C8527" stroke-width="3.200" fill="none"/><path d="M1951.0,1646.5l8.600,15h-17.200z" fill="#fff" stroke="#4C8527" stroke-width="3.500"/><path d="M2342.5,1655h29.500" stroke="#5BBF98" stroke-width="3.200" fill="none"/><circle cx="2357.25" cy="1655" r="6.100" fill="#fff" stroke="#5BBF98" stroke-width="3.200"/><path d="M2864.25,1655h29.500" stroke="#4845B0" stroke-width="3.200" fill="none"/><circle cx="2879.0" cy="1655" r="6.100" fill="#fff" stroke="#4845B0" stroke-width="3.200"/></svg>
<div class="abs" style="left:1852px;top:1781px;width:28px;height:28px;border-radius:5px;background:#2250C8"></div>
<svg style="left:0;top:0" width="3456" height="1914" viewBox="0 0 3456 1914"><path d="M1860,1795.400l4.200,4l7.800-7.800" fill="none" stroke="#fff" stroke-width="3.500" stroke-linecap="round" stroke-linejoin="round"/></svg>
<span class="t " style="top:1781.07px;font-size:28.5px;color:#091E42;left:1897.71px;letter-spacing:0.226px;">Show grid lines</span>
</body></html>
